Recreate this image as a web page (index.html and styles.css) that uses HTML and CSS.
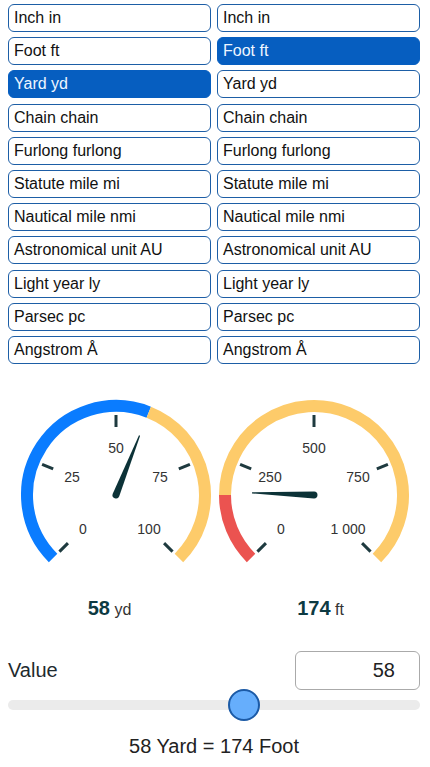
FILE: index.html
```html
<!DOCTYPE html>
<html lang="en">
<head>
    <meta charset="UTF-8">
    <meta name="viewport" content="width=device-width, initial-scale=1.0">
    <title>Length Converter</title>
    <link rel="stylesheet" href="styles.css">
</head>
<body>
    <div class="units">
        <div class="unit-list">
            <button class="unit">Inch in</button>
            <button class="unit">Foot ft</button>
            <button class="unit selected">Yard yd</button>
            <button class="unit">Chain chain</button>
            <button class="unit">Furlong furlong</button>
            <button class="unit">Statute mile mi</button>
            <button class="unit">Nautical mile nmi</button>
            <button class="unit">Astronomical unit AU</button>
            <button class="unit">Light year ly</button>
            <button class="unit">Parsec pc</button>
            <button class="unit">Angstrom Å</button>
        </div>
        <div class="unit-list">
            <button class="unit">Inch in</button>
            <button class="unit selected">Foot ft</button>
            <button class="unit">Yard yd</button>
            <button class="unit">Chain chain</button>
            <button class="unit">Furlong furlong</button>
            <button class="unit">Statute mile mi</button>
            <button class="unit">Nautical mile nmi</button>
            <button class="unit">Astronomical unit AU</button>
            <button class="unit">Light year ly</button>
            <button class="unit">Parsec pc</button>
            <button class="unit">Angstrom Å</button>
        </div>
    </div>

    <div class="gauges">
        <svg width="198" height="198" viewBox="0 0 198 198">
            <path d="M 36.07 161.93 A 89 89 0 0 1 131.76 16.25" class="arc" stroke="#0a7cff"/>
            <path d="M 131.76 16.25 A 89 89 0 0 1 161.93 161.93" class="arc" stroke="#fdcb6a"/>
            <g class="ticks">
                <line x1="50.92" y1="147.08" x2="42.43" y2="155.57"/>
                <line x1="36.18" y1="72.98" x2="25.09" y2="68.38"/>
                <line x1="99" y1="31" x2="99" y2="19"/>
                <line x1="161.82" y1="72.98" x2="172.91" y2="68.38"/>
                <line x1="147.08" y1="147.08" x2="155.57" y2="155.57"/>
            </g>
            <g class="labels">
                <text x="66" y="138">0</text>
                <text x="55" y="86">25</text>
                <text x="99" y="57">50</text>
                <text x="143" y="86">75</text>
                <text x="132" y="138">100</text>
            </g>
            <path class="needle" transform="translate(99 99) rotate(21.6)" d="M -3.5 0 L -0.6 -64 L 0.6 -64 L 3.5 0 A 3.5 3.5 0 0 1 -3.5 0 Z"/>
        </svg>
        <svg width="198" height="198" viewBox="0 0 198 198">
            <path d="M 36.07 161.93 A 89 89 0 0 1 10 99" class="arc" stroke="#eb5350"/>
            <path d="M 10 99 A 89 89 0 1 1 161.93 161.93" class="arc" stroke="#fdcb6a"/>
            <g class="ticks">
                <line x1="50.92" y1="147.08" x2="42.43" y2="155.57"/>
                <line x1="36.18" y1="72.98" x2="25.09" y2="68.38"/>
                <line x1="99" y1="31" x2="99" y2="19"/>
                <line x1="161.82" y1="72.98" x2="172.91" y2="68.38"/>
                <line x1="147.08" y1="147.08" x2="155.57" y2="155.57"/>
            </g>
            <g class="labels">
                <text x="66" y="138">0</text>
                <text x="55" y="86">250</text>
                <text x="99" y="57">500</text>
                <text x="143" y="86">750</text>
                <text x="133" y="138">1 000</text>
            </g>
            <path class="needle" transform="translate(99 99) rotate(-88)" d="M -3.5 0 L -0.6 -62 L 0.6 -62 L 3.5 0 A 3.5 3.5 0 0 1 -3.5 0 Z"/>
        </svg>
    </div>
    <div class="readings">
        <div class="reading"><b>58</b> yd</div>
        <div class="reading"><b>174</b> ft</div>
    </div>

    <div class="value-row">
        <label for="value">Value</label>
        <input type="text" id="value" class="value-input" value="58">
    </div>
    <input type="range" class="slider" min="0" max="100" value="58">
    <div class="result">58 Yard = 174 Foot</div>
</body>
</html>
```

FILE: styles.css
```css
body {
    font-family: "Liberation Sans", Arial, sans-serif;
    margin: 0;
    padding: 4px 10px 0 8px;
    color: #222;
}
.units {
    display: flex;
    gap: 6px;
}
.unit-list {
    flex: 1;
    display: flex;
    flex-direction: column;
    gap: 5.2px;
}
.unit {
    height: 28px;
    padding: 0 5px;
    border: 1px solid #1d5ea6;
    border-radius: 6px;
    background: #fff;
    color: #111;
    font-family: inherit;
    font-size: 16px;
    text-align: left;
}
.unit.selected {
    background: #065ec0;
    border-color: #065ec0;
    color: #eef6ff;
}
.gauges {
    display: flex;
    justify-content: center;
    margin-top: 32px;
    margin-left: 2px;
}
.gauges svg {
    display: block;
}
.arc {
    fill: none;
    stroke-width: 12;
}
.ticks line {
    stroke: #1e3a3f;
    stroke-width: 3;
}
.labels text {
    font-size: 14px;
    fill: #333;
    text-anchor: middle;
}
.needle {
    fill: #0c3237;
}
.readings {
    display: flex;
    justify-content: center;
    gap: 12px;
    margin-top: 2px;
    margin-left: 2px;
}
.reading {
    width: 200px;
    text-align: center;
    line-height: 24px;
    font-size: 16px;
    color: #333;
}
.reading b {
    font-size: 20px;
    color: #0d3a42;
}
.value-row {
    display: flex;
    justify-content: space-between;
    align-items: center;
    margin-top: 29px;
}
.value-row label {
    font-size: 20px;
    color: #1e2a2e;
}
.value-input {
    box-sizing: border-box;
    width: 125px;
    height: 39px;
    border: 1px solid #aaa;
    border-radius: 6px;
    padding: 0 24px 0 8px;
    font-family: inherit;
    font-size: 20px;
    text-align: right;
    color: #222;
}
.slider {
    -webkit-appearance: none;
    appearance: none;
    display: block;
    width: 100%;
    height: 10px;
    margin: 10px 0 0;
    border-radius: 5px;
    background: #ebebeb;
}
.slider::-webkit-slider-thumb {
    -webkit-appearance: none;
    width: 32px;
    height: 32px;
    box-sizing: border-box;
    border-radius: 50%;
    background: #66aefc;
    border: 2px solid #1b5aa6;
}
.result {
    margin-top: 25px;
    font-size: 20px;
    text-align: center;
    color: #222;
}
```
